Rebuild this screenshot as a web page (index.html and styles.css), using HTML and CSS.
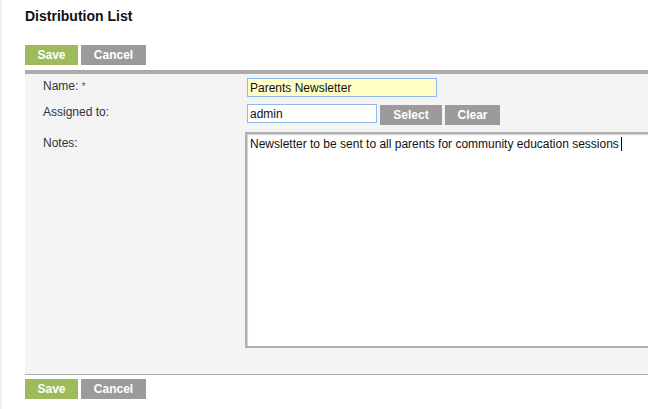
FILE: index.html
```html
<!DOCTYPE html>
<html lang="en">
<head>
  <meta charset="UTF-8" />
  <title>Distribution List</title>
  <link rel="stylesheet" href="styles.css">
</head>
<body>
  <div class="page">
    <div class="side-strip"></div>
    <div class="main">
      <h1>Distribution List</h1>
      <div class="actions">
        <button class="btn btn-save">Save</button>
        <button class="btn btn-cancel">Cancel</button>
      </div>
      <div class="panel">
        <div class="row">
          <label>Name: <span class="req">*</span></label>
          <input type="text" class="field field-name" value="Parents Newsletter" />
        </div>
        <div class="row">
          <label>Assigned to:</label>
          <input type="text" class="field field-user" value="admin" />
          <button class="btn btn-gray btn-select">Select</button>
          <button class="btn btn-gray btn-clear">Clear</button>
        </div>
        <div class="row">
          <label class="notes-label">Notes:</label>
          <div class="notes">Newsletter to be sent to all parents for community education sessions<span class="caret"></span></div>
        </div>
      </div>
      <div class="actions actions-bottom">
        <button class="btn btn-save">Save</button>
        <button class="btn btn-cancel">Cancel</button>
      </div>
    </div>
  </div>
</body>
</html>
```

FILE: styles.css
```css
* {
  margin: 0;
  padding: 0;
  box-sizing: border-box;
  font-family: 'Liberation Sans', Arial, Helvetica, sans-serif;
}

html, body {
  height: 100%;
  background: #fff;
  overflow: hidden;
}

.page {
  display: flex;
  height: 100%;
}

.side-strip {
  width: 2px;
  flex: none;
  background: #f0f0f0;
}

.main {
  flex: 1;
  min-width: 0;
  padding: 8px 1px 0 23px;
}

h1 {
  font-size: 14px;
  font-weight: 700;
  color: #111;
  line-height: 17px;
  margin-bottom: 20px;
}

.actions {
  display: flex;
  gap: 3px;
  margin-bottom: 5px;
}

.actions-bottom {
  margin-top: 4px;
}

.btn {
  height: 20px;
  border: none;
  color: #fff;
  font-size: 12px;
  font-weight: 700;
  cursor: pointer;
}

.btn-save {
  width: 53px;
  background: #9dbb5a;
}

.btn-cancel {
  width: 65px;
  background: #9b9b9b;
}

.btn-gray {
  background: #9b9b9b;
  margin-left: 3px;
  margin-top: 1px;
}

.btn-select {
  width: 62px;
}

.btn-clear {
  width: 55px;
}

.panel {
  background: #f4f4f4;
  border-top: 4px solid #ababab;
  border-bottom: 1px solid #ababab;
  padding: 4px 0 26px 18px;
  display: flex;
  flex-direction: column;
  gap: 7px;
  overflow: hidden;
}

.row {
  display: flex;
  align-items: flex-start;
}

label {
  width: 204px;
  flex: none;
  font-size: 12px;
  color: #333;
  line-height: 17px;
}

.req {
  color: #e0211d;
  font-size: 10px;
  vertical-align: top;
}

.notes-label {
  padding-top: 3px;
}

.field {
  height: 19px;
  border: 1px solid #8fb8e4;
  font-size: 12px;
  color: #111;
  padding: 0 2px;
  outline: none;
}

.field-name {
  width: 190px;
  background: #ffffc6;
}

.field-user {
  width: 130px;
  background: #fff;
}

.notes {
  flex: none;
  width: 420px;
  height: 216px;
  margin-left: -2px;
  background: #fff;
  border: 2px solid #b0b0b0;
  border-right: none;
  box-shadow: inset 1px 1px 1px #d0d0d0;
  font-size: 12px;
  color: #111;
  padding: 3px 3px;
  line-height: 15px;
}

.caret {
  display: inline-block;
  width: 1px;
  height: 14px;
  background: #000;
  margin-left: 2px;
  vertical-align: -3px;
}
```
